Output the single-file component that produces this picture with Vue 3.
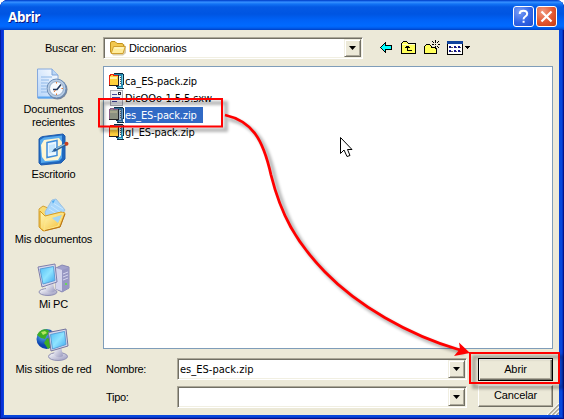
<script setup>
const places = [
  { id: 'recent', label: 'Documentos\nrecientes' },
  { id: 'desktop', label: 'Escritorio' },
  { id: 'docs', label: 'Mis documentos' },
  { id: 'pc', label: 'Mi PC' },
  { id: 'net', label: 'Mis sitios de red' },
]
const files = [
  { name: 'ca_ES-pack.zip', type: 'zip' },
  { name: 'DicOOo-1.5.5.sxw', type: 'doc' },
  { name: 'es_ES-pack.zip', type: 'zip', selected: true },
  { name: 'gl_ES-pack.zip', type: 'zip' },
]
</script>

<template>
  <div class="window">
    <header class="titlebar">
      <h1>Abrir</h1>
      <button class="cap help" aria-label="Ayuda">
        <svg width="19" height="19" viewBox="0 0 19 19"><path d="M5.800 7V6.200Q6 3.700 9.500 3.700T13.200 6.800Q13.200 8.300 11.300 9.500T9.600 12.300M9.600 13.800V15.800" fill="none" stroke="#fff" stroke-width="2" /></svg>
      </button>
      <button class="cap close" aria-label="Cerrar">
        <svg width="19" height="19" viewBox="0 0 19 19"><path d="M4.500 4.500L14.500 14.500M14.500 4.500L4.500 14.500" fill="none" stroke="#fff" stroke-width="2.200" /></svg>
      </button>
    </header>

    <main class="dialog">
      <div class="lookin">
        <label>Buscar en:</label>
        <div class="combo">
          <svg class="folder" width="18" height="16" viewBox="0 0 18 16">
            <path d="M2 4L3 2H7L9 4H15L17 7V13L14 15.500H4L2 13Z" fill="#b39b5a" opacity=".5" />
            <path d="M1.500 3Q1.500 1.500 3 1.500H6L8 3.500H13.500L14.500 5V12L13 13.500H3L1.500 12Z" fill="#f2c850" stroke="#c2921c" />
            <path d="M4.500 6.500H16.300L14 13.500H2.200Z" fill="#ffec9a" stroke="#d0a030" />
            <path d="M5.400 8H14.500" stroke="#fffbd8" />
          </svg>
          <span class="value">Diccionarios</span>
          <i class="drop"></i>
        </div>
        <svg class="tools" width="92" height="18" viewBox="0 0 92 18" shape-rendering="crispEdges">
          <path d="M.5 8.500L5.500 3.500V6.500H11.500V10.500H5.500V13.500Z" fill="#0ff" stroke="#000" />
          <g transform="translate(21 2)">
            <path d="M.5 12.500V2.500L2.500.5H5.500L7.500 2.500H14.500V12.500Z" fill="#ffff5c" stroke="#000" />
            <path d="M1 3.500H14" stroke="#ffffc8" />
            <path d="M6.500 9V5M4 6.500H9M5 5.500H8M6 9.500H11" fill="none" stroke="#000" />
          </g>
          <g transform="translate(44 2)">
            <path d="M.5 12.500V5.500L2.500 3.500H5.500L7.500 5.500H12.500V12.500Z" fill="#ffff5c" stroke="#000" />
            <path d="M8 4H15V7H8Z" fill="#ece9d8" />
            <path d="M7 6.500H11M11.500 -1V2M11.500 5V8M14 3.500H16M8 3.500H10M8 .5H9M9 1.500H10M14 .5H15M13 1.500H14M13 5.500H14M14 6.500H15M11 3.500H12" stroke="#000" />
          </g>
          <g transform="translate(67 2)">
            <path d="M.5.5H15.500V13.500H.5Z" fill="#fff" stroke="#000" />
            <path d="M0 1.500H16" stroke="#10429c" stroke-width="3" />
            <path d="M2 5H4V7H2ZM7 5H9V7H7ZM11 5H13V7H11ZM2 9H4V11H2ZM7 9H9V11H7ZM11 9H13V11H11Z" fill="#15158a" />
            <path d="M4 6.500H6M9 6.500H10M13 6.500H14M4 10.500H6M9 10.500H10M13 10.500H14" stroke="#555" />
          </g>
          <path d="M85 7H90V8H89V9H88V10H87V9H86V8H85Z" />
        </svg>
      </div>

      <nav class="places">
        <a v-for="p in places" :key="p.id" :class="['place', p.id]">
          <svg width="34" height="34" viewBox="0 0 34 34">
            <defs>
              <linearGradient id="screen" x1="0" y1="0" x2="1" y2="1"><stop stop-color="#51bdf5" /><stop offset=".5" stop-color="#8fe4ff" /><stop offset="1" stop-color="#3aa5ef" /></linearGradient>
              <linearGradient id="gold" x1="0" y1="0" x2="1" y2="1"><stop stop-color="#fff8b8" /><stop offset="1" stop-color="#f4bd35" /></linearGradient>
              <linearGradient id="grey" x1="0" y1="0" x2="1" y2="1"><stop stop-color="#fff" /><stop offset="1" stop-color="#9696bd" /></linearGradient>
              <linearGradient id="paper" x1="1" y1="0" x2="0" y2="1"><stop stop-color="#fff" /><stop offset="1" stop-color="#b4d4fa" /></linearGradient>
              <radialGradient id="globe" cx=".35" cy=".3"><stop stop-color="#65bff6" /><stop offset="1" stop-color="#0b43b0" /></radialGradient>
            </defs>
            <g v-if="p.id === 'recent'">
              <path d="M1.500 1H16L22 7V30H1.500Z" fill="url(#paper)" stroke="#86a9dd" />
              <path d="M16 1V7H22" fill="#bcd8f6" stroke="#7ea4d8" />
              <path d="M5 9H16M5 12H13M5 15H12M5 18H11M5 21H10M5 24H11" stroke="#8fb8e8" />
              <path d="M2 29.500H20" stroke="#5ba5ef" stroke-width="2" />
              <circle cx="21.500" cy="21.500" r="10" fill="#77879f" />
              <circle cx="20.500" cy="20.500" r="9.500" fill="#b9cde4" stroke="#6a8db8" />
              <circle cx="20.500" cy="20.500" r="7" fill="#f8fbff" stroke="#8fa9c8" />
              <path d="M17 21.500H21L25 16.500" fill="none" stroke="#253b60" stroke-width="1.600" />
              <path d="M20.500 14V15.500M20.500 25.500V27M25.500 20.500H27M19.500 22L18 24" stroke="#e17832" />
            </g>
            <g v-else-if="p.id === 'desktop'">
              <path d="M2 6Q3 4 6 3.500L26 1L28 3V26L24 30L4 32L2 30Z" fill="#1f68c0" stroke="#1f5cae" />
              <path d="M3 7L7 4.500L25 2.500V25L22 28L4 30Z" fill="#58abee" />
              <path d="M7 7L22 5L25 9L24 22L21 27L8 28L5 24L4 12Z" fill="#fff6d2" />
              <path d="M10 9.500L20 7.500V22.500L10 24.500Z" fill="#eaf7ff" stroke="#3f8edb" stroke-width="1.500" />
              <path d="M12 12L18 11V19L12 20Z" fill="#c6e8ff" />
              <path d="M17 17.500L29 11" stroke="#2f5f8e" stroke-width="2.600" />
              <path d="M19 15.800L28 11" stroke="#8ac2ea" stroke-width="1.200" />
              <path d="M14.500 19L18 15.500L19.500 18Z" fill="#285f9d" />
              <circle cx="29.500" cy="10.800" r="2" fill="#c8401f" />
            </g>
            <g v-else-if="p.id === 'docs'">
              <path d="M3 11L7 8L12 10V30L7 33L3 29Z" fill="#f9dc74" stroke="#d3a035" />
              <path d="M9 14L16 2L20 1L29 12L22 22L11 22Z" fill="#a8d6fb" stroke="#9cc2e2" />
              <path d="M15 8L24 14M17 5L27 11M13 11L21 16" stroke="#c8e8ff" />
              <path d="M16 3L19 2L17 6Z" fill="#4caaf0" />
              <path d="M4 13L9 18L25 14L29 15L24 29L8 33L4 30Z" fill="url(#gold)" stroke="#d79b1e" />
              <path d="M9 21L27 15L22 28L8 32Z" fill="url(#gold)" stroke="#ffe685" />
              <path d="M16 20L26 17L22 25Z" fill="#a4d6f3" />
              <path d="M9 32.500L24 29L29 16" fill="none" stroke="#b8751b" />
            </g>
            <g v-else-if="p.id === 'pc'">
              <path d="M19 5L25 2L32 4V25L25 29L19 26Z" fill="#a2a2cc" stroke="#8888b4" />
              <path d="M19 5L25 7V28L19 26Z" fill="#d5d5ec" />
              <path d="M25 7L32 4.500V25L25 29Z" fill="#9797c3" />
              <path d="M26 11L31 9M26 14L31 12M26 17L31 15" stroke="#d8d8f0" />
              <path d="M28 21H30" stroke="#68d956" stroke-width="2" />
              <ellipse cx="11" cy="29" rx="9" ry="3.500" fill="url(#grey)" stroke="#9090b4" />
              <path d="M9 22L16 20L18 28Q14 31 9 28Z" fill="url(#grey)" />
              <path d="M1 4L18 1L20 19L5 24Z" fill="#d8d8ec" stroke="#8080ac" />
              <path d="M3 6L16.500 3.500L18 17.500L6 21Z" fill="url(#screen)" stroke="#5a9fd8" />
            </g>
            <g v-else>
              <circle cx="10.500" cy="11" r="10" fill="url(#globe)" />
              <path d="M3 4Q7 0 12 2L15 5L11 7L9 11L5 10L1 7ZM11 10L17 12L16 18L12 21L8 15Z" fill="#3fae25" />
              <path d="M5 4L9 3L11 5L7 7Z" fill="#b4e761" />
              <ellipse cx="22" cy="28.500" rx="9.500" ry="4" fill="url(#grey)" stroke="#9090b4" />
              <path d="M19 20L25 18L27 28Q22 31 18 27Z" fill="url(#grey)" />
              <path d="M12.500 4.500L30 1L32 18L15 23Z" fill="#d8d8ec" stroke="#74749e" />
              <path d="M14.500 6.500L28.500 3.500L30 16.500L16.500 21Z" fill="url(#screen)" stroke="#5a9fd8" />
            </g>
          </svg>
          <span>{{ p.label }}</span>
        </a>
      </nav>

      <ul class="filelist">
        <li v-for="f in files" :key="f.name" :class="{ selected: f.selected }">
          <svg width="16" height="16" viewBox="0 0 16 16" shape-rendering="crispEdges">
            <g v-if="f.type === 'zip'">
              <path d="M5 0H14V1H15V12H14V16H8V14H9V3H5Z" :fill="f.selected ? '#2f6795' : '#2488b0'" />
              <path d="M5 .5H14M14.500 1V12M8 15.500H15M7 13.500H9" stroke="#0c2c42" />
              <path d="M0 2H1V1H5V2H10V12H0Z" :fill="f.selected ? '#8a9080' : '#ffd13c'" />
              <path d="M1 4H8V6H1Z" :fill="f.selected ? '#a5a68c' : '#fff3a0'" />
              <path d="M.5 12V2.500H1.500V1.500H4.500V2.500H9" fill="none" :stroke="f.selected ? '#8d5a86' : '#e8220c'" />
              <path d="M0 12.500H10" stroke="#222" />
              <path d="M9 3H12V13H9Z" :fill="f.selected ? '#9fb2c8' : '#f4f4f0'" />
              <path d="M9.500 2V13" stroke="#20242c" />
              <path d="M11 4.500H12M11 6.500H12M11 8.500H12M11 10.500H12" stroke="#555" />
              <path d="M10 14.500H13M13.500 2V11" :stroke="f.selected ? '#6f9cc4' : '#6fd0e6'" />
            </g>
            <g v-else>
              <path d="M1.500.5H13.500V15.500H1.500Z" fill="#f0f0f6" stroke="#a9aab4" />
              <path d="M3 4.500H8M3 7.500H11M3 9.500H11M3 11.500H8" stroke="#40459c" />
              <path d="M9 2H12V5H9Z" fill="#282b3e" />
              <path d="M10 3H11V4H10Z" fill="#fff" />
            </g>
          </svg>
          <span>{{ f.name }}</span>
        </li>
      </ul>

      <div class="fields">
        <label>Nombre:</label>
        <div class="combo"><span class="value">es_ES-pack.zip</span><i class="drop"></i></div>
        <button class="btn primary">Abrir</button>
        <label>Tipo:</label>
        <div class="combo"><span class="value"></span><i class="drop"></i></div>
        <button class="btn">Cancelar</button>
      </div>
    </main>

    <svg class="grip" width="12" height="12" viewBox="0 0 12 12">
      <path d="M0 12L12 0M4 12L12 4M8 12L12 8" stroke="#fff" stroke-width="1.200" />
      <path d="M1.500 12L12 1.500M5.500 12L12 5.500M9.500 12L12 9.500" stroke="#aca899" stroke-width="1.600" />
    </svg>

    <svg class="annotations" width="564" height="419" viewBox="0 0 564 419">
      <defs><filter id="blur" x="-10%" y="-30%" width="120%" height="160%"><feGaussianBlur stdDeviation="1.700" /></filter></defs>
      <g fill="none" stroke="#000" stroke-width="4" opacity=".28" filter="url(#blur)" transform="translate(4 4)">
        <rect x="99" y="99" width="123" height="27" />
        <rect x="470" y="353" width="89" height="30" />
        <path d="M225 115C252 121 263 139 271 175C281 215 296 242 325 272C357 305 408 335 460 349" />
      </g>
      <rect x="99" y="99" width="123" height="27.500" fill="none" stroke="#f00" stroke-width="2" />
      <rect x="470" y="353" width="89" height="30" fill="none" stroke="#f00" stroke-width="2" />
      <path d="M225 115C252 121 263 139 271 175C281 215 296 242 325 272C357 305 408 335 460 350" fill="none" stroke="#f00" stroke-width="2.800" />
      <path d="M470 353L459 342.500L460 349L454 356Z" fill="#f00" />
      <path d="M340.500 137.500V153.500L344 150L347 156.500L350 155.500L347.500 149.500H352Z" fill="#fff" stroke="#000" />
    </svg>
  </div>
</template>

<style>
body { margin: 0; overflow: hidden; background: #fff; }
</style>

<style scoped>
* { box-sizing: border-box; }
.window {
  position: relative;
  width: 564px;
  height: 419px;
  padding: 0 5px 4px 4px;
  border-radius: 8px 8px 0 0;
  background: #0847dc;
  box-shadow: inset 1px 0 #001ea0, inset -1px -1px #00138c, inset -2px -2px #0635c4, inset 3px 0 #0831d9;
  font: 11px/13px "Liberation Sans", sans-serif;
  color: #000;
  overflow: hidden;
}
.titlebar {
  display: flex;
  align-items: center;
  height: 30px;
  margin: 0 -5px 0 -4px;
  padding: 3px 7px 0 8px;
  gap: 2px;
  background: linear-gradient(#0842c0 0, #0a58e6 1px, #3a93ff 2px, #1273f5 4px, #0459e4 7px, #0055e2 14px, #0062f7 20px, #006aff 26px, #005cec 28px, #0040c4 30px);
}
h1 {
  flex: 1;
  margin: 0;
  font: bold 13.500px/16px "Noto Sans", sans-serif;
  letter-spacing: -.4px;
  color: #fff;
  text-shadow: 1px 1px #0a1883;
}
.cap {
  display: grid;
  place-items: center;
  width: 21px;
  height: 21px;
  padding: 0;
  border: 1px solid #fff;
  border-radius: 3px;
}
.help { background: radial-gradient(circle at 30% 25%, #7a9df5, #3365e6 55%, #1d4dce); }
.close { background: radial-gradient(circle at 30% 25%, #f19a7f, #e2552f 55%, #c33b14); }
.dialog {
  display: grid;
  grid-template: 36px 283px 66px / 99px 450px;
  height: 385px;
  background: #ece9d8;
}
.lookin {
  grid-column: 1 / 3;
  display: flex;
  align-items: flex-start;
  padding-top: 7px;
}
.lookin label { width: 99px; padding: 5px 7px 0 0; text-align: right; letter-spacing: -.15px; }
.lookin .value { letter-spacing: -.2px; }
.combo {
  display: flex;
  align-items: center;
  width: 260px;
  height: 22px;
  padding: 1px;
  background: #fff;
  border: 1px solid;
  border-color: #aca899 #fff #fff #aca899;
  box-shadow: inset 1px 1px #716f64, inset -1px -1px #f1efe2;
}
.value { flex: 1; }
.folder { margin: 0 2px 0 4px; }
.drop {
  display: grid;
  place-items: center;
  width: 17px;
  height: 18px;
  background: #ece9d8;
  border: 1px solid;
  border-color: #f1efe2 #716f64 #716f64 #f1efe2;
  box-shadow: inset 1px 1px #fff, inset -1px -1px #aca899;
}
.drop::before {
  content: "";
  width: 7px;
  height: 4px;
  background: #000;
  clip-path: polygon(0 0, 100% 0, 50% 100%);
}
.tools { margin: 2px 0 0 17px; }
.places {
  display: flex;
  flex-direction: column;
  align-items: center;
  grid-row: 2 / 4;
  padding-top: 2px;
  letter-spacing: -.2px;
}
.place {
  display: flex;
  flex-direction: column;
  align-items: center;
  flex: none;
  height: 65px;
  gap: 1px;
  text-align: center;
  white-space: pre;
}
.place svg { height: 34px; flex: none; }
.filelist {
  margin: 0;
  padding: 5px 0 0 5px;
  list-style: none;
  background: #fff;
  border: 1px solid #7f9db9;
  font: 11px/15px "DejaVu Sans Condensed", "DejaVu Sans", sans-serif;
}
.filelist li { display: flex; align-items: center; height: 17px; }
.filelist li span { padding: 1px 6px 0 0; letter-spacing: -.1px; }
.filelist li.selected span { background: #316ac5; color: #fff; }
.fields {
  grid-column: 2;
  display: grid;
  grid-template-columns: 74px 290px 75px;
  grid-auto-rows: 22px;
  row-gap: 6px;
  padding-top: 9px;
}
.fields label { padding: 5px 0 0 3px; letter-spacing: -.3px; }
.fields .combo { width: 290px; }
.fields .value { padding: 1px 0 0 1px; font-family: "DejaVu Sans Condensed", "DejaVu Sans", sans-serif; letter-spacing: .02px; }
.btn {
  width: 75px;
  height: 22px;
  margin: -1px 0 0 11px;
  padding: 0 0 1px;
  font: inherit;
  letter-spacing: -.1px;
  color: #000;
  background: #ece9d8;
  border: 1px solid;
  border-color: #fff #716f64 #716f64 #fff;
  box-shadow: inset -1px -1px #aca899;
}
.btn.primary { height: 23px; margin-top: 0; border-color: #000; box-shadow: inset 1px 1px #fff, inset -1px -1px #716f64, inset -2px -2px #aca899; }
.grip { position: absolute; right: 5px; bottom: 4px; }
.annotations { position: absolute; left: 0; top: 0; pointer-events: none; }
</style>
